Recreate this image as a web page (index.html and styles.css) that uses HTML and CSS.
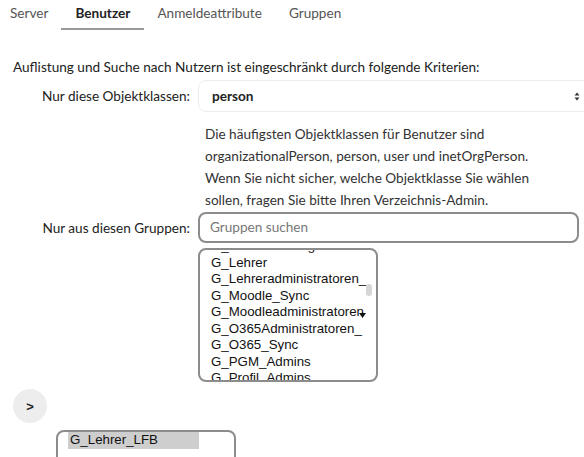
FILE: index.html
```html
<!DOCTYPE html>
<html lang="de">
<head>
<meta charset="utf-8">
<link rel="stylesheet" href="styles.css">
</head>
<body>
<nav class="tabs">
  <span class="tab">Server</span>
  <span class="tab active">Benutzer</span>
  <span class="tab">Anmeldeattribute</span>
  <span class="tab">Gruppen</span>
</nav>
<main class="content">
  <p class="intro">Auflistung und Suche nach Nutzern ist eingeschränkt durch folgende Kriterien:</p>
  <div class="form">
    <label class="label">Nur diese Objektklassen:</label>
    <div class="select">
      <span class="select-value">person</span>
      <svg class="select-arrow" width="6" height="9" viewBox="0 0 6 9"><path d="M3 0.5 L5.5 3.5 H0.5 Z M3 8.5 L5.5 5.5 H0.5 Z" fill="#333"/></svg>
    </div>
    <div></div>
    <p class="help">Die häufigsten Objektklassen für Benutzer sind<br>organizationalPerson, person, user und inetOrgPerson.<br>Wenn Sie nicht sicher, welche Objektklasse Sie wählen<br>sollen, fragen Sie bitte Ihren Verzeichnis-Admin.</p>
    <label class="label">Nur aus diesen Gruppen:</label>
    <div class="input">Gruppen suchen</div>
    <div></div>
    <div class="listbox">
      <ul class="items">
        <li>G_Klassenleitungen</li>
        <li>G_Lehrer</li>
        <li>G_Lehreradministratoren_</li>
        <li>G_Moodle_Sync</li>
        <li>G_Moodleadministratoren</li>
        <li>G_O365Administratoren_</li>
        <li>G_O365_Sync</li>
        <li>G_PGM_Admins</li>
        <li>G_Profil_Admins</li>
      </ul>
      <span class="thumb"></span>
      <svg class="cursor" width="7" height="6" viewBox="0 0 7 6"><path d="M0 1 H7 L3.5 6 Z M3 0 H4 V2 H3 Z" fill="#111"/></svg>
    </div>
  </div>
  <button class="move">&gt;</button>
  <div class="listbox selected-box">
    <ul class="items sel-items">
      <li class="chosen">G_Lehrer_LFB</li>
    </ul>
  </div>
</main>
</body>
</html>
```
FILE: styles.css
```css
* { box-sizing: border-box; }
html, body { margin: 0; padding: 0; background: #fff; }
body {
  font-family: "Lato", "Open Sans", sans-serif;
  font-size: 13.6px;
  color: #222;
  width: 584px;
  height: 457px;
  overflow: hidden;
}
.tabs {
  display: flex;
  height: 30px;
  padding-left: 10px;
  align-items: stretch;
}
.tab {
  color: #555;
  padding: 5px 0 0;
  margin-right: 27px;
}
.tab.active {
  color: #222;
  font-weight: bold;
  border-bottom: 2px solid #999;
  padding: 5px 14px 0;
  margin-left: -14px;
  margin-right: 13px;
}
.content { padding: 0 0 0 13px; }
.intro { margin: 27px 0 0; line-height: 20px; }
.form {
  display: grid;
  grid-template-columns: 177px 1fr;
  column-gap: 8px;
  margin-top: 3px;
}
.label {
  text-align: right;
  align-self: center;
  color: #222;
}
.select {
  height: 32px;
  margin-right: -10px;
  border: 1px solid #ececec;
  border-radius: 8px;
  display: flex;
  align-items: center;
  justify-content: space-between;
  padding: 0 13px 0 13px;
}
.select-value { font-weight: bold; color: #222; }
.help {
  margin: 11px 0 1px;
  padding-left: 7px;
  line-height: 22px;
  color: #333;
}
.input {
  height: 31px;
  border: 2px solid #8c8c8c;
  border-radius: 8px;
  margin-right: 5px;
  color: #777;
  padding: 4px 10px;
  line-height: 19px;
}
.listbox {
  position: relative;
  width: 180px;
  height: 134px;
  border: 2px solid #8c8c8c;
  border-radius: 8px;
  margin-top: 5px;
  overflow: hidden;
  font-family: "Liberation Sans", Arial, sans-serif;
  font-size: 13.3px;
  color: #111;
}
.items {
  list-style: none;
  margin: -12px 0 0;
  padding: 0 0 0 11px;
}
.items li { line-height: 16.5px; white-space: nowrap; }
.thumb {
  position: absolute;
  right: 4px;
  top: 34px;
  width: 6px;
  height: 12px;
  border-radius: 3px;
  background: #d6d6d6;
}
.cursor { position: absolute; left: 159px; top: 62px; }
.move {
  display: block;
  margin: 7px 0 0;
  width: 34px;
  height: 34px;
  border-radius: 50%;
  border: none;
  background: #ededed;
  font-family: "Liberation Sans", Arial, sans-serif;
  font-weight: bold;
  font-size: 13px;
  color: #222;
  padding: 0;
}
.selected-box { margin: 7px 0 0 43px; }
.sel-items { margin: 0; padding: 0 0 0 10px; }
.chosen { background: #cecece; width: 131px; padding-left: 2px; }
```
